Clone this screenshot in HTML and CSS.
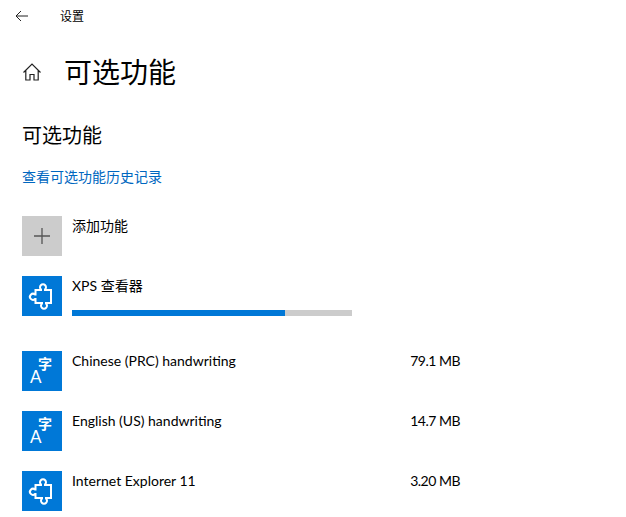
FILE: index.html
```html
<!DOCTYPE html>
<html>

<head>
    <title>设置</title>
    <link rel="stylesheet" href="styles.css">
</head>

<body>
    <div class="topbar">
        <svg class="back-icon" width="16" height="16" viewBox="0 0 16 16">
            <path d="M14 8H2M7 3L2 8l5 5" />
        </svg>
        <span class="topbar-title">设置</span>
    </div>

    <div class="page-header">
        <svg class="home-icon" width="20" height="20" viewBox="0 0 20 20">
            <path d="M1.500 10.500L10 2l8.500 8.500M3.800 8.500V18H8v-5.500h4V18h4.200V8.500" />
        </svg>
        <h1>可选功能</h1>
    </div>

    <h2>可选功能</h2>
    <a class="history-link" href="#">查看可选功能历史记录</a>

    <div class="feature feature-add">
        <div class="tile tile-add">
            <svg width="16" height="16" viewBox="0 0 16 16">
                <path d="M8 0V16M0 8H16" />
            </svg>
        </div>
        <div class="feature-name">添加功能</div>
    </div>

    <div class="feature">
        <div class="tile">
            <svg class="puzzle" width="40" height="40" viewBox="0 0 40 40">
                <path d="M13.500 14H19V13.500a3 3 0 1 1 4 0V14H29V27H24v.5a3 3 0 1 1-4 0V27H13.500V23H13a3 3 0 1 1 0-4.400h.5z" />
            </svg>
        </div>
        <div class="feature-body">
            <div class="feature-name">XPS 查看器</div>
            <div class="progress">
                <div class="progress-fill" style="width: 76%"></div>
            </div>
        </div>
    </div>

    <div class="feature feature-lang">
        <div class="tile">
            <span class="lang-a">A</span><span class="lang-zi">字</span>
        </div>
        <div class="feature-name">Chinese (PRC) handwriting</div>
        <div class="feature-size">79.1 MB</div>
    </div>

    <div class="feature">
        <div class="tile">
            <span class="lang-a">A</span><span class="lang-zi">字</span>
        </div>
        <div class="feature-name">English (US) handwriting</div>
        <div class="feature-size">14.7 MB</div>
    </div>

    <div class="feature">
        <div class="tile">
            <svg class="puzzle" width="40" height="40" viewBox="0 0 40 40">
                <path d="M13.500 14H19V13.500a3 3 0 1 1 4 0V14H29V27H24v.5a3 3 0 1 1-4 0V27H13.500V23H13a3 3 0 1 1 0-4.400h.5z" />
            </svg>
        </div>
        <div class="feature-name">Internet Explorer 11</div>
        <div class="feature-size">3.20 MB</div>
    </div>
</body>

</html>
```

FILE: styles.css
```css
body {
    margin: 0;
    height: 517px;
    overflow: hidden;
    background-color: #fff;
    color: #000;
    font-family: "Lato", "Noto Sans CJK SC", sans-serif;
    font-size: 14px;
}

.topbar {
    display: flex;
    align-items: center;
    height: 30px;
    padding-left: 14px;
}

.back-icon {
    margin-top: 2px;
}

.back-icon path {
    fill: none;
    stroke: #222;
    stroke-width: 1;
}

.topbar-title {
    margin-left: 30px;
    font-size: 12px;
}

.page-header {
    display: flex;
    align-items: center;
    height: 48px;
    margin-top: 18px;
    padding-left: 22px;
}

.home-icon path {
    fill: none;
    stroke: #222;
    stroke-width: 1.2;
}

h1 {
    margin: 0 0 0 22px;
    font-size: 28px;
    font-weight: 400;
    line-height: 48px;
}

h2 {
    margin: 25px 0 0 22px;
    font-size: 20px;
    font-weight: 400;
    line-height: 28px;
}

.history-link {
    display: block;
    margin: 18px 0 0 22px;
    color: #0067c0;
    line-height: 20px;
    text-decoration: none;
}

.feature {
    display: flex;
    align-items: flex-start;
    height: 40px;
    margin: 20px 0 0 22px;
}

.feature-add {
    margin-top: 29px;
}

.feature-lang {
    margin-top: 35px;
}

.tile {
    position: relative;
    display: flex;
    flex: none;
    align-items: center;
    justify-content: center;
    width: 40px;
    height: 40px;
    background-color: #0078d7;
    color: #fff;
}

.tile-add {
    background-color: #ccc;
}

.tile-add path {
    fill: none;
    stroke: #555;
    stroke-width: 1.3;
}

.puzzle path {
    fill: none;
    stroke: #fff;
    stroke-width: 2;
}

.lang-a {
    position: absolute;
    left: 8px;
    top: 16px;
    font-size: 17px;
    line-height: 20px;
}

.lang-zi {
    position: absolute;
    left: 16px;
    top: 3px;
    font-size: 14px;
    font-weight: 700;
    line-height: 20px;
}

.feature-name {
    width: 318px;
    margin-left: 10px;
    flex: none;
    line-height: 20px;
    white-space: nowrap;
}

.feature-body .feature-name {
    margin-bottom: 14px;
}

.feature-size {
    width: 70px;
    letter-spacing: -0.5px;
    line-height: 20px;
    text-align: right;
    white-space: nowrap;
}

.feature-body {
    flex: none;
}

.progress {
    width: 280px;
    height: 6px;
    margin-left: 10px;
    background-color: #ccc;
}

.progress-fill {
    height: 100%;
    background-color: #0078d7;
}
```
